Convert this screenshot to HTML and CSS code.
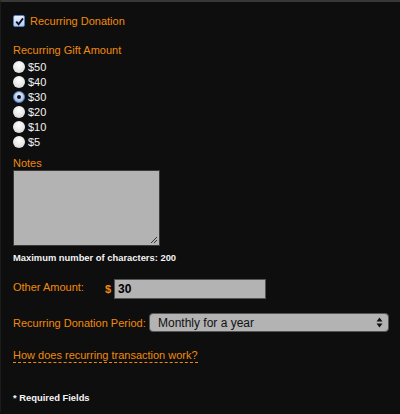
FILE: index.html
```html
<!DOCTYPE html>
<html>
<head>
<meta charset="utf-8">
<link rel="stylesheet" href="styles.css">
</head>
<body>
<div class="panel">
  <label class="check-row">
    <span class="checkbox"><svg width="9" height="9" viewBox="0 0 9 9"><path d="M1.2 4.6 L3.6 7.2 L8 1.4" fill="none" stroke="#0a0f2a" stroke-width="1.9"/></svg></span>
    <span class="orange">Recurring Donation</span>
  </label>

  <div class="label gift">Recurring Gift Amount</div>
  <div class="radios">
    <div class="radio-row"><span class="radio"></span><span class="amt">$50</span></div>
    <div class="radio-row"><span class="radio"></span><span class="amt">$40</span></div>
    <div class="radio-row"><span class="radio on"><span class="dot"></span></span><span class="amt">$30</span></div>
    <div class="radio-row"><span class="radio"></span><span class="amt">$20</span></div>
    <div class="radio-row"><span class="radio"></span><span class="amt">$10</span></div>
    <div class="radio-row"><span class="radio"></span><span class="amt">$5</span></div>
  </div>

  <div class="label notes">Notes</div>
  <div class="textarea"><svg class="grip" width="9" height="9" viewBox="0 0 9 9"><path d="M8 2 L2 8 M8 5 L5 8" stroke="#333" stroke-width="1"/></svg></div>
  <div class="max">Maximum number of characters: 200</div>

  <div class="other-row">
    <span class="label other-label">Other Amount:</span>
    <span class="dollar">$</span>
    <div class="input">30</div>
  </div>

  <div class="period-row">
    <span class="label period-label">Recurring Donation Period:</span>
    <div class="select">
      <span>Monthly for a year</span>
      <svg width="7" height="11" viewBox="0 0 7 11"><path d="M3.5 0.5 L6.5 4.5 H0.5 Z M3.5 10.5 L6.5 6.5 H0.5 Z" fill="#111"/></svg>
    </div>
  </div>

  <div class="help"><span class="dashed">How does recurring transaction work?</span></div>

  <div class="required">* Required Fields</div>
</div>
</body>
</html>
```
FILE: styles.css
```css
html, body {
  margin: 0;
  padding: 0;
  background: #0e0e0e;
}
body {
  font-family: "Liberation Sans", Arial, Helvetica, sans-serif;
  width: 400px;
  height: 414px;
  overflow: hidden;
}
.panel {
  border-top: 2px solid #383838;
  border-left: 1px solid #1c1c1c;
  height: 412px;
  box-sizing: border-box;
  padding: 13px 0 0 12px;
}
.orange, .label {
  color: #f08a0c;
  font-size: 11px;
}
.check-row {
  display: flex;
  align-items: center;
  gap: 5px;
  height: 12px;
}
.checkbox {
  width: 10px;
  height: 10px;
  border: 1px solid #5a7fc0;
  border-radius: 2px;
  background: linear-gradient(#e8f0ff, #b8cdef);
  display: flex;
  align-items: center;
  justify-content: center;
}
.label.gift {
  margin-top: 17px;
  line-height: 13px;
}
.radios {
  margin-top: 2px;
  display: flex;
  flex-direction: column;
}
.radio-row {
  display: flex;
  align-items: center;
  height: 15px;
  gap: 3px;
}
.radio {
  width: 12px;
  height: 12px;
  border-radius: 50%;
  background: radial-gradient(circle at 50% 35%, #ffffff, #e6e6e6 60%, #c8c8c8);
  display: flex;
  align-items: center;
  justify-content: center;
  box-sizing: border-box;
}
.radio.on {
  background: radial-gradient(circle at 50% 35%, #e9f1ff, #a9c4ee 65%, #7e9fd8);
  border: 1px solid #5a80c8;
}
.dot {
  width: 4px;
  height: 4px;
  border-radius: 50%;
  background: #111;
}
.amt {
  color: #f2f2f2;
  font-size: 11px;
}
.label.notes {
  margin-top: 8px;
  line-height: 13px;
}
.textarea {
  width: 147px;
  height: 76px;
  box-sizing: border-box;
  border: 1px solid #3a3a3a;
  background: #b3b3b3;
  position: relative;
}
.grip {
  position: absolute;
  right: 1px;
  bottom: 1px;
}
.max {
  margin-top: 6px;
  color: #f4f4f4;
  font-size: 9.4px;
  font-weight: bold;
  line-height: 12px;
}
.other-row {
  margin-top: 15px;
  display: flex;
  align-items: flex-start;
  height: 20px;
}
.other-label {
  width: 92px;
  line-height: 13px;
  margin-top: 2px;
}
.dollar {
  color: #f08a0c;
  font-weight: bold;
  font-size: 11px;
  width: 9px;
  line-height: 13px;
  margin-top: 4px;
}
.input {
  width: 152px;
  height: 20px;
  box-sizing: border-box;
  border: 1px solid #555;
  background: #b3b3b3;
  color: #000;
  font-weight: bold;
  font-size: 12px;
  line-height: 18px;
  padding-left: 3px;
}
.period-row {
  margin-top: 14px;
  display: flex;
  align-items: center;
  gap: 4px;
}
.period-label {
  white-space: nowrap;
  width: 132px;
}
.select {
  width: 240px;
  height: 19px;
  box-sizing: border-box;
  border: 1px solid #555;
  border-radius: 4px;
  background: #b3b3b3;
  display: flex;
  align-items: center;
  justify-content: space-between;
  padding: 0 5px 0 8px;
  font-size: 12px;
  color: #111;
}
.help {
  margin-top: 17px;
  font-size: 11px;
  color: #f08a0c;
  line-height: 13px;
}
.dashed {
  border-bottom: 1px dashed #f08a0c;
  padding-bottom: 1px;
}
.required {
  margin-top: 30px;
  color: #f4f4f4;
  font-size: 9.4px;
  font-weight: bold;
  line-height: 12px;
}
```
